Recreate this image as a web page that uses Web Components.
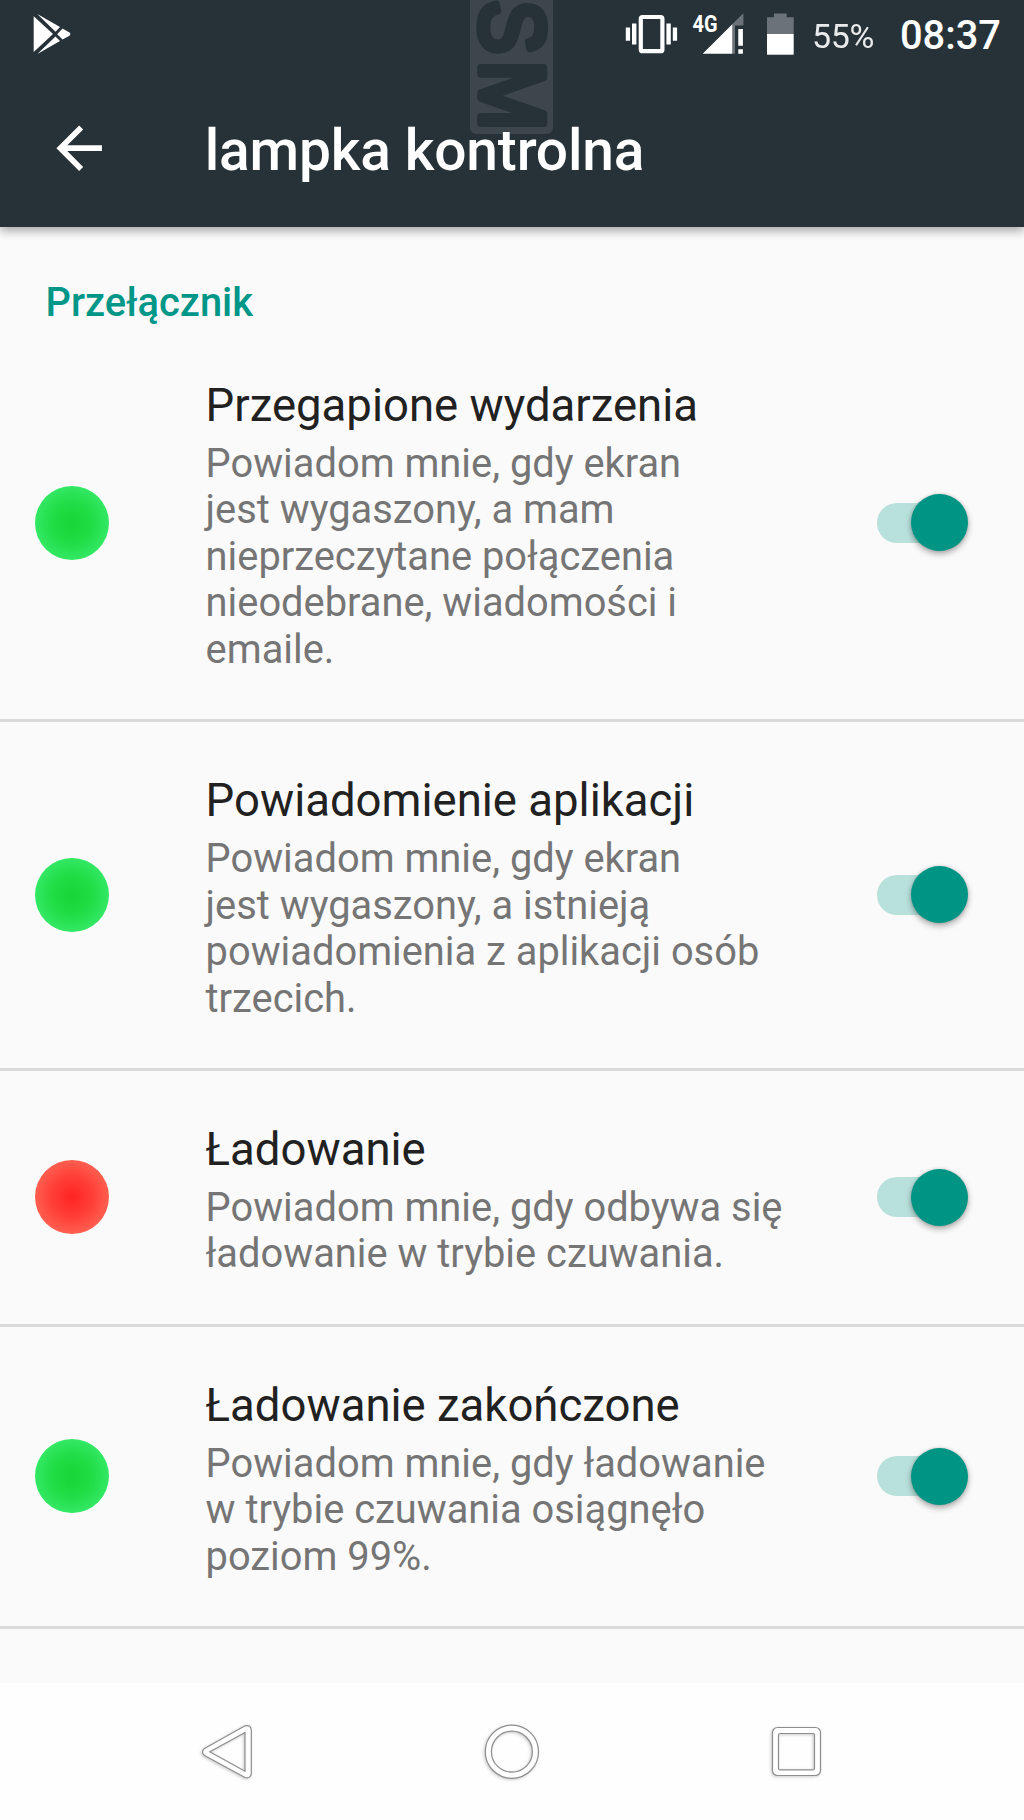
<!DOCTYPE html>
<html lang="pl">
<head>
<meta charset="utf-8">
<title>lampka kontrolna</title>
<style>
  html, body { margin: 0; background: #fafafa; }
  body { width: 1024px; height: 1820px; overflow: hidden; font-family: Roboto, "Noto Sans", sans-serif; }
</style>
</head>
<body>
<settings-screen></settings-screen>
<script>
function define(name, html, setup) {
  const template = document.createElement('template');
  template.innerHTML = html;
  customElements.define(name, class extends HTMLElement {
    constructor() {
      super();
      this.attachShadow({ mode: 'open' }).append(template.content.cloneNode(true));
    }
    connectedCallback() { if (setup) setup(this, this.shadowRoot); }
  });
}

define('status-bar', `
  <style>
    :host { display: flex; height: 68px; color: #fff; align-items: flex-start; }
    svg { display: block; flex: none; }
    .left { flex: 1; }
    .percent, .clock { white-space: nowrap; line-height: 40px; }
    .percent { width: 60px; margin: 15.5px 0 0 18px; font-size: 34px; letter-spacing: -.3px; opacity: .9; }
    .clock { width: 101px; margin: 16.3px 23px 0 28px; font-size: 39.8px; font-weight: 500; }
  </style>
  <svg class="left" width="600" height="68" viewBox="0 0 600 68" preserveAspectRatio="xMinYMin" fill="#fff">
    <path d="M33.7 16.3L53 34L33.7 52z"/>
    <path d="M37.3 14L60 27L55.5 31.7z"/>
    <path d="M37.3 54L60 41L55.5 36.5z"/>
    <path d="M62.5 28.6L69 32.2Q71.8 34 69 35.9L62.5 39.6L57.2 34.2z"/>
  </svg>
  <svg width="174" height="68" viewBox="620 0 174 68" fill="#fff">
    <rect x="640.8" y="17" width="21.6" height="34.2" rx="1.8" fill="none" stroke="#fff" stroke-width="4.2"/>
    <path d="M625.8 27.4h4.3v13.4h-4.3zM632 23.6h4.4v21H632zM666.4 23.6h4.4v21h-4.4zM672.8 27.4h4.3v13.4h-4.3z"/>
    <text x="692.5" y="31.8" font-size="24" font-weight="700" textLength="25" lengthAdjust="spacingAndGlyphs">4G</text>
    <path d="M702.7 53.8L732.3 24.2V53.8z"/>
    <path d="M743.4 13.2V25.5H735V53.8H732.3V24.2z" opacity=".32"/>
    <path d="M738.3 29h4.6v16.8h-4.6zM738.3 49.2h4.6v4.6h-4.6z"/>
    <path d="M767 17.2h7v-3.8h12.6v3.8h7.1V34H767z" opacity=".32"/>
    <path d="M767 34h26.7v20.7H767z"/>
  </svg>
  <span class="percent">55%</span>
  <span class="clock">08:37</span>
`);

define('app-bar', `
  <style>
    :host { display: flex; height: 159px; align-items: center; color: #fff; }
    svg { display: block; margin: 1px 91.3px 0 45.2px; }
    h1 { margin: 5.5px 0 0; font-size: 56.9px; line-height: 67px; font-weight: 500; letter-spacing: -.17px; white-space: nowrap; }
  </style>
  <svg width="68.3" height="68.3" viewBox="0 0 24 24" fill="#fff"><path d="M20 11H7.83l5.59-5.59L12 4l-8 8 8 8 1.41-1.41L7.83 13H20v-2z"/></svg>
  <h1><slot></slot></h1>
`);

define('brand-mark', `
  <style>:host { display: block; position: absolute; left: 470px; top: 0; } svg { display: block; overflow: visible; }</style>
  <svg width="83" height="134" viewBox="0 0 83 134">
    <path d="M0 0H83V127Q83 134 76 134H7Q0 134 0 127z" fill="#3e464d"/>
    <g transform="translate(10.8 0) rotate(90)" font-family="Liberation Sans, sans-serif" font-size="90"
      fill="#263238" stroke="#263238" stroke-width="7.5" stroke-linejoin="round">
      <text x="0" y="0" textLength="54" lengthAdjust="spacingAndGlyphs">S</text>
      <text x="60.5" y="0" textLength="70" lengthAdjust="spacingAndGlyphs">M</text>
    </g>
  </svg>
`);

define('led-dot', `
  <style>
    :host { display: block; width: 74px; height: 74px; border-radius: 50%; flex: none;
      background: radial-gradient(circle closest-side, #17d537, #21dd46 55%, #33e864); }
    :host([tone="red"]) { background: radial-gradient(circle closest-side, #ff2424, #ff3e37 55%, #ff5f50); }
  </style>
`);

define('toggle-switch', `
  <style>
    :host { display: flex; width: 91px; height: 58px; align-items: center; justify-content: flex-end; flex: none; }
    .track { flex: 1; height: 40px; border-radius: 20px 0 0 20px; background: #b9e1dc; margin-right: -29px; }
    .thumb { width: 57px; height: 57px; border-radius: 50%; background: #009485;
      box-shadow: 0 3px 6px rgba(0,0,0,.32), 0 0 3px rgba(0,0,0,.14); }
  </style>
  <div class="track"></div><div class="thumb"></div>
`);

define('setting-row', `
  <style>
    :host { display: flex; align-items: center; box-sizing: border-box; padding: 0 55.8px 0 34.8px;
      border-bottom: 3px solid #dadada; }
    .text { flex: 1; align-self: flex-start; margin-left: 96.8px; padding: 52.3px 0 45.8px; white-space: nowrap; }
    .title { font-size: 45.5px; line-height: 53.3px; color: #212121; }
    .note { margin-top: 8.5px; font-size: 39.84px; line-height: 46.48px; color: #757575; }
  </style>
  <led-dot></led-dot>
  <div class="text"><div class="title"><slot name="title"></slot></div><div class="note"><slot></slot></div></div>
  <toggle-switch></toggle-switch>
`, (host, root) => root.querySelector('led-dot').setAttribute('tone', host.getAttribute('tone') || 'green'));

define('nav-bar', `
  <style>
    :host { display: flex; height: 137px; background: #fefefe; align-items: center; justify-content: center; gap: 214px; }
    svg { display: block; overflow: visible; filter: drop-shadow(-1px 1.5px 1.5px rgba(0,0,0,.2)); }
  </style>
  <svg width="70" height="70" viewBox="193 1717 70 70" fill="#fff" stroke="#8e8e8e" stroke-width="1.2">
    <path fill-rule="evenodd" d="M245 1725.8Q251 1724.5 251.3 1730.5V1773Q251 1779 245 1777.5L204.5 1755.5Q200.5 1752 204.5 1748.5zM245 1732.5V1771.3L209.8 1751.8z"/>
  </svg>
  <svg width="70" height="70" viewBox="477 1717 70 70" fill="#fff" stroke="#8e8e8e" stroke-width="1.2">
    <path fill-rule="evenodd" d="M485.3 1751.7a26.6 26.6 0 1 0 53.2 0a26.6 26.6 0 1 0 -53.2 0zM491.4 1751.7a20.5 20.5 0 1 0 41 0a20.5 20.5 0 1 0 -41 0z"/>
  </svg>
  <svg width="70" height="70" viewBox="761 1717 70 70" fill="#fff" stroke="#8e8e8e" stroke-width="1.2">
    <path fill-rule="evenodd" d="M777.5 1727.5h38a5 5 0 0 1 5 5v38a5 5 0 0 1 -5 5h-38a5 5 0 0 1 -5 -5v-38a5 5 0 0 1 5 -5zM780 1733.5h33q1.5 0 1.5 1.5v33.3q0 1.5 -1.5 1.5h-33q-1.5 0 -1.5 -1.5v-33.3q0 -1.5 1.5 -1.5z"/>
  </svg>
`);

define('settings-screen', `
  <style>
    :host { display: flex; flex-direction: column; width: 1024px; height: 1820px; background: #fafafa; }
    header { position: relative; z-index: 1; height: 227px; flex: none; background: #263238; box-shadow: 0 4px 9px rgba(0,0,0,.33); }
    status-bar, app-bar { position: relative; }
    main { flex: 1; min-height: 0; overflow: hidden; }
    h2 { margin: 0; padding: 52.9px 0 0 45.5px; height: 46.8px; font-size: 39.84px; line-height: 46.5px; font-weight: 500; color: #009688; }
  </style>
  <header>
    <brand-mark></brand-mark>
    <status-bar></status-bar>
    <app-bar>lampka kontrolna</app-bar>
  </header>
  <main>
    <h2>Przełącznik</h2>
    <setting-row><span slot="title">Przegapione wydarzenia</span>Powiadom mnie, gdy ekran<br>jest wygaszony, a mam<br>nieprzeczytane połączenia<br>nieodebrane, wiadomości i<br>emaile.</setting-row>
    <setting-row><span slot="title">Powiadomienie aplikacji</span>Powiadom mnie, gdy ekran<br>jest wygaszony, a istnieją<br>powiadomienia z aplikacji osób<br>trzecich.</setting-row>
    <setting-row tone="red"><span slot="title">Ładowanie</span>Powiadom mnie, gdy odbywa się<br>ładowanie w trybie czuwania.</setting-row>
    <setting-row><span slot="title">Ładowanie zakończone</span>Powiadom mnie, gdy ładowanie<br>w trybie czuwania osiągnęło<br>poziom 99%.</setting-row>
  </main>
  <nav-bar></nav-bar>
`);
</script>
</body>
</html>
